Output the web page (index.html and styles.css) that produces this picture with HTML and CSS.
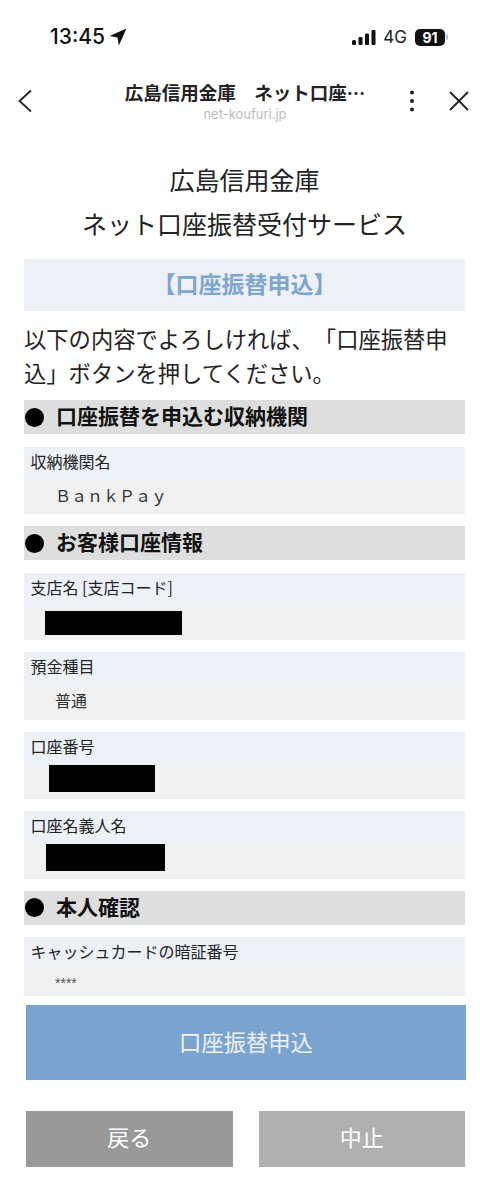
FILE: index.html
```html
<!DOCTYPE html>
<html lang="ja">
<head>
<meta charset="utf-8">
<title>口座振替申込</title>
<link rel="stylesheet" href="styles.css">
</head>
<body>
<header class="status">
  <div class="time"><span>13:45</span>
    <svg class="loc" viewBox="0 0 16 16"><path d="M15.5 0.5 L0.5 7.2 L7.6 8.4 L8.8 15.5 Z" fill="#111"/></svg>
  </div>
  <div class="sys">
    <svg class="bars" viewBox="0 0 24 15"><rect x="0" y="10" width="4" height="5" rx="1.5"/><rect x="6.5" y="7" width="4" height="8" rx="1"/><rect x="13" y="3.5" width="4" height="11.5" rx="1"/><rect x="19.5" y="0" width="4" height="15" rx="1"/></svg>
    <span class="net">4G</span>
    <span class="batt">91</span><span class="nub"></span>
  </div>
</header>
<nav class="nav">
  <svg class="icon back" viewBox="0 0 16 24"><path d="M13 2.5 L1.5 13 L13 23.5" fill="none" stroke="#222" stroke-width="1.8"/></svg>
  <div class="nav-title">
    <div class="site">広島信用金庫　ネット口座…</div>
    <div class="url">net-koufuri.jp</div>
  </div>
  <svg class="icon dots" viewBox="0 0 6 24"><circle cx="3" cy="3.5" r="2"/><circle cx="3" cy="12" r="2"/><circle cx="3" cy="20.5" r="2"/></svg>
  <svg class="icon close" viewBox="0 0 20 20"><path d="M1 1 L19 19 M19 1 L1 19" fill="none" stroke="#222" stroke-width="1.8"/></svg>
</nav>
<main class="page">
  <h1 class="org">広島信用金庫<br>ネット口座振替受付サービス</h1>
  <h2 class="band">【口座振替申込】</h2>
  <p class="lead">以下の内容でよろしければ、「口座振替申込」ボタンを押してください。</p>

  <h3 class="sec"><span class="dot"></span>口座振替を申込む収納機関</h3>
  <div class="field"><div class="label">収納機関名</div><div class="value wide">ＢａｎｋＰａｙ</div></div>

  <h3 class="sec"><span class="dot"></span>お客様口座情報</h3>
  <div class="field"><div class="label">支店名 [支店コード]</div><div class="value"><span class="mask m1"></span></div></div>
  <div class="field"><div class="label">預金種目</div><div class="value">普通</div></div>
  <div class="field"><div class="label">口座番号</div><div class="value"><span class="mask m2"></span></div></div>
  <div class="field"><div class="label">口座名義人名</div><div class="value"><span class="mask m3"></span></div></div>

  <h3 class="sec"><span class="dot"></span>本人確認</h3>
  <div class="field short"><div class="label">キャッシュカードの暗証番号</div><div class="value pin">****</div></div>

  <div class="actions">
    <button class="btn primary">口座振替申込</button>
    <div class="pair">
      <button class="btn back-btn">戻る</button>
      <button class="btn stop">中止</button>
    </div>
  </div>
</main>
</body>
</html>
```
FILE: styles.css
```css
* { box-sizing: border-box; }
html, body { margin: 0; padding: 0; }
body {
  width: 480px;
  height: 1180px;
  overflow: hidden;
  background: #fff;
  color: #1c1c1c;
  font-family: "Noto Sans CJK JP", "Liberation Sans", sans-serif;
  text-spacing-trim: space-all;
}
.status {
  height: 72px;
  padding: 24px 32px 0 50px;
  display: flex;
  justify-content: space-between;
  align-items: flex-start;
}
.time {
  display: flex;
  align-items: center;
  gap: 4px;
  font: 500 21px/26px Inter, "Liberation Sans", sans-serif;
  color: #111;
}
.loc { width: 18px; height: 18px; }
.sys { display: flex; align-items: center; height: 26px; }
.bars { width: 24px; height: 15px; fill: #111; margin-right: 7px; }
.net { font: 400 17px/20px Inter, "Liberation Sans", sans-serif; color: #222; margin-right: 8px; }
.batt {
  width: 30px;
  height: 17px;
  background: #111;
  color: #fff;
  border-radius: 5px;
  font: 700 14px/17px Inter, "Liberation Sans", sans-serif;
  text-align: center;
}
.nub { width: 2px; height: 6px; background: #bbb; border-radius: 0 2px 2px 0; margin-left: 1px; }
.nav {
  height: 56px;
  padding: 0 11px 0 18px;
  display: flex;
  align-items: flex-start;
}
.icon { display: block; flex: none; }
.back { width: 16px; height: 24px; margin-top: 16px; }
.nav-title { width: 300px; margin-left: 61px; text-align: center; flex: none; }
.site { font-weight: 700; font-size: 18.5px; line-height: 24px; margin-top: 8px; color: #222; white-space: nowrap; }
.url { font: 400 13px/16px Inter, "Liberation Sans", sans-serif; color: #bdbdbd; margin-top: 2px; }
.dots { width: 6px; height: 24px; margin-top: 17px; margin-left: 14px; fill: #222; }
.close { width: 20px; height: 20px; margin-top: 19px; margin-left: 34px; }
.page { padding: 0 15px 0 24px; }
.org {
  margin: 0;
  padding-top: 29px;
  text-align: center;
  font-weight: 400;
  font-size: 25px;
  line-height: 44px;
  height: 131px;
  color: #222;
}
.band {
  margin: 0;
  height: 52px;
  background: #edf1f6;
  color: #7ea6cf;
  text-align: center;
  font-size: 23px;
  line-height: 48px;
  font-weight: 700;
}
.lead {
  margin: 10px 0 11px;
  font-size: 22.3px;
  line-height: 34px;
  color: #222;
  height: 68px;
}
.sec {
  margin: 0 0 12.5px;
  height: 34px;
  padding-bottom: 4px;
  background: #dedede;
  display: flex;
  align-items: center;
  font-size: 21px;
  line-height: 30px;
  font-weight: 700;
  color: #111;
}
.dot { width: 19px; height: 19px; border-radius: 50%; background: #000; margin: 4px 12px 0 1px; flex: none; }
.field { height: 67.6px; margin-bottom: 12px; font-size: 16px; }
.field.short { height: 59px; margin-bottom: 8.5px; }
.label { height: 34px; background: #edf1f6; padding: 3px 0 0 6.5px; line-height: 22px; color: #222; }
.short .label { height: 30px; padding-top: 3px; }
.value { height: 33.6px; background: #f0f0f0; padding-left: 31px; line-height: 28px; color: #333; }
.short .value { height: 29px; }
.value.wide { padding-left: 31px; }
.value.pin { font: 400 14px/33px "Liberation Sans", sans-serif; color: #555; }
.mask { display: block; background: #000; }
.m1 { width: 137px; height: 24px; margin-left: -10px; position: relative; top: 4px; }
.m2 { width: 106px; height: 27px; margin-left: -6px; position: relative; top: -1px; }
.m3 { width: 119px; height: 27px; margin-left: -9px; position: relative; top: -1px; }
.actions { margin-left: 2px; }
.btn {
  display: block;
  border: 0;
  border-radius: 0;
  color: #fff;
  font-family: inherit;
  font-weight: 400;
  padding: 0;
}
.primary { width: 440px; height: 75px; background: #7ba3cf; font-size: 22.3px; color: #eef3f9; padding-bottom: 3px; }
.pair { display: flex; gap: 26px; margin-top: 31px; }
.back-btn, .stop { width: 207px; height: 56px; font-size: 22px; padding-bottom: 5px; }
.back-btn { background: #999; }
.stop { background: #b0b0b0; }
```
